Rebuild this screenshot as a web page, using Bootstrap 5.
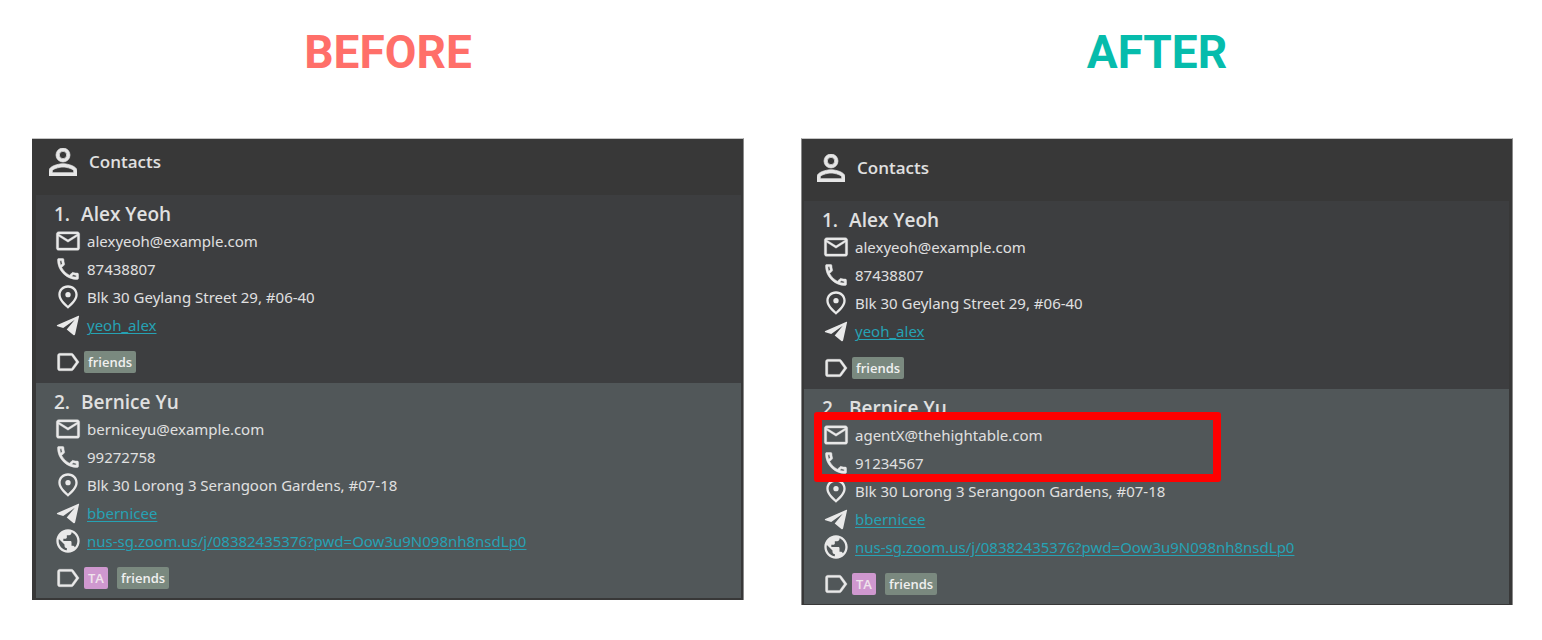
<!DOCTYPE html>
<html lang="en">
<head>
<meta charset="utf-8">
<meta name="viewport" content="width=device-width, initial-scale=1">
<title>Contacts: before and after</title>
<link href="https://cdn.jsdelivr.net/npm/bootstrap@5.3.0/dist/css/bootstrap.min.css" rel="stylesheet">
<style>
  body { font-family: "Noto Sans", "Open Sans", sans-serif; background: #fff; color: #e0e0e0; }
  .compare { display: grid; grid-template-columns: 1fr 1fr; column-gap: 57px; padding: 20px 29px 32px 32px; }
  .stage-title { font-family: Roboto, sans-serif; font-weight: 700; font-size: 46px; line-height: 64px; margin: 0 0 54px; text-align: center; }
  .title-before { color: #ff6f69; }
  .title-after { color: #06bcac; }
  .contacts-panel { background: #383838; border: 1px solid #8a8a8a; border-top-color: #c4c4c4; border-left-width: 0; border-bottom: 0; padding: 0 2px 2px 4px; }
  .panel-after { border-left-width: 1px; padding: 0 3px 1px 2px; }
  .panel-head { height: 56px; padding: 0 0 11px 13px; gap: 12px; }
  .panel-after .panel-head { height: 62px; padding-bottom: 4px; }
  .panel-head h2 { font-family: "Open Sans", sans-serif; font-size: 17px; line-height: 24px; font-weight: 600; margin: 0; }
  .person { background: #3d3e40; padding: 7px 18px 10px; }
  .person-alt { background: #515759; padding-bottom: 9px; }
  .person h3 { font-family: "Open Sans", sans-serif; font-size: 19px; line-height: 25px; font-weight: 600; margin: 0; display: flex; gap: 11px; }
  .detail { display: flex; align-items: center; gap: 5px; height: 28px; font-size: 15px; line-height: 20px; }
  .detail svg, .tags > svg { width: 28px; height: 28px; flex: none; fill: #e9e9e9; }
  .detail a { color: #26a2b4; text-decoration: underline; text-decoration-thickness: 1px; text-underline-offset: 2px; }
  .tags { display: flex; align-items: center; height: 22px; margin-top: 12px; }
  .chip { font-family: "Open Sans", sans-serif; font-size: 13px; line-height: 22px; font-weight: 600; padding: 0 4px; margin-left: 2px; border-radius: 2px; background: #7a897f; color: #f0f0f0; }
  .chip-ta { background: #cf98cf; color: #f0e4ec; margin-right: 7px; }
  .changed { position: relative; }
  .changed::after { content: ""; position: absolute; left: -8px; top: -9px; width: 407px; bottom: -5px; border: 8px solid #f00; border-radius: 3px; }
</style>
</head>
<body>
<svg class="d-none" aria-hidden="true">
  <symbol id="i-mail" viewBox="0 0 24 24"><path stroke="#e9e9e9" stroke-width=".3" d="M20 4H4c-1.100 0-2 .9-2 2v12c0 1.100.9 2 2 2h16c1.100 0 2-.9 2-2V6c0-1.100-.9-2-2-2zm0 14H4V8l8 5 8-5v10zm-8-7L4 6h16l-8 5z"/></symbol>
  <symbol id="i-phone" viewBox="0 0 24 24"><path stroke="#e9e9e9" stroke-width=".4" d="M6.540 5c.060.890.210 1.760.450 2.590l-1.200 1.200c-.410-1.200-.670-2.470-.760-3.790h1.510m9.860 12.020c.850.240 1.720.390 2.600.450v1.490c-1.320-.090-2.590-.350-3.800-.750l1.200-1.190M7.500 3H4c-.550 0-1 .450-1 1 0 9.390 7.610 17 17 17 .550 0 1-.450 1-1v-3.490c0-.550-.450-1-1-1-1.240 0-2.450-.200-3.570-.570a1.020 1.020 0 0 0-1.020.240l-2.200 2.200a15.050 15.050 0 0 1-6.590-6.590l2.200-2.200c.280-.280.360-.670.250-1.020A11.360 11.360 0 0 1 8.500 4c0-.550-.450-1-1-1z"/></symbol>
  <symbol id="i-pin" viewBox="0 0 24 24"><path fill-rule="evenodd" d="M12 2C7.300 2 3.700 5.500 3.700 10c0 5.200 5.700 9.500 8.300 12 2.600-2.500 8.300-6.800 8.300-12 0-4.500-3.600-8-8.300-8zm0 2c3.600 0 6.300 2.600 6.300 6 0 3.600-3.700 6.900-6.300 9.400C9.400 16.900 5.700 13.600 5.700 10c0-3.400 2.700-6 6.300-6z"/><circle cx="12" cy="10" r="2.300"/></symbol>
  <symbol id="i-plane" viewBox="0 0 24 24"><path d="M21 4 2.800 12c-.5.300-.5.800.1 1l5 1.500L17.800 7.600l-6.900 8.300 5.700 4.600c.7.500 1.300.2 1.500-.6L21.500 4.500c.1-.4-.1-.6-.5-.5z"/></symbol>
  <symbol id="i-globe" viewBox="0 0 24 24"><path d="M12 2C6.480 2 2 6.480 2 12s4.480 10 10 10 10-4.480 10-10S17.520 2 12 2zm-1 17.930c-3.950-.490-7-3.850-7-7.930 0-.620.080-1.210.210-1.790L9 15v1c0 1.100.900 2 2 2v1.930zm6.900-2.540c-.260-.810-1-1.390-1.900-1.390h-1v-3c0-.550-.450-1-1-1H8v-2h2c.550 0 1-.450 1-1V7h2c1.100 0 2-.900 2-2v-.410c2.930 1.190 5 4.060 5 7.410 0 2.080-.800 3.970-2.100 5.390z"/></symbol>
  <symbol id="i-tag" viewBox="0 0 24 24"><path stroke="#e9e9e9" stroke-width=".3" d="M16.630 5.340A2 2 0 0 0 15 4.500H5c-1.100 0-2 .9-2 2v11c0 1.100.9 2 2 2h10a2 2 0 0 0 1.630-.84L21.500 12l-4.870-6.660zM15 17.500H5V6.500H15L19 12 15 17.500z"/></symbol>
  <symbol id="i-person" viewBox="4 4 16 16"><path stroke="#e6e6e6" stroke-width=".4" d="M12 5.900a2.100 2.100 0 1 1 0 4.200 2.100 2.100 0 0 1 0-4.200m0 9c2.970 0 6.100 1.460 6.100 2.100v1.100H5.900V17c0-.640 3.130-2.100 6.100-2.100M12 4a4 4 0 1 0 0 8 4 4 0 0 0 0-8zm0 9c-2.670 0-8 1.340-8 4v3h16v-3c0-2.660-5.330-4-8-4z"/></symbol>
</svg>

<main class="compare">
  <section>
    <h1 class="stage-title title-before">BEFORE</h1>
    <div class="contacts-panel">
      <header class="panel-head d-flex align-items-center">
        <svg width="28" height="28" fill="#e6e6e6"><use href="#i-person"/></svg>
        <h2>Contacts</h2>
      </header>
      <article class="person">
        <h3><span>1.</span><span>Alex Yeoh</span></h3>
        <div class="detail"><svg><use href="#i-mail"/></svg><span>alexyeoh@example.com</span></div>
        <div class="detail"><svg><use href="#i-phone"/></svg><span>87438807</span></div>
        <div class="detail"><svg><use href="#i-pin"/></svg><span>Blk 30 Geylang Street 29, #06-40</span></div>
        <div class="detail"><svg><use href="#i-plane"/></svg><a href="#">yeoh_alex</a></div>
        <div class="tags"><svg><use href="#i-tag"/></svg><span class="chip">friends</span></div>
      </article>
      <article class="person person-alt">
        <h3><span>2.</span><span>Bernice Yu</span></h3>
        <div class="detail"><svg><use href="#i-mail"/></svg><span>berniceyu@example.com</span></div>
        <div class="detail"><svg><use href="#i-phone"/></svg><span>99272758</span></div>
        <div class="detail"><svg><use href="#i-pin"/></svg><span>Blk 30 Lorong 3 Serangoon Gardens, #07-18</span></div>
        <div class="detail"><svg><use href="#i-plane"/></svg><a href="#">bbernicee</a></div>
        <div class="detail"><svg><use href="#i-globe"/></svg><a href="#">nus-sg.zoom.us/j/08382435376?pwd=Oow3u9N098nh8nsdLp0</a></div>
        <div class="tags"><svg><use href="#i-tag"/></svg><span class="chip chip-ta">TA</span><span class="chip">friends</span></div>
      </article>
    </div>
  </section>

  <section>
    <h1 class="stage-title title-after">AFTER</h1>
    <div class="contacts-panel panel-after">
      <header class="panel-head d-flex align-items-center">
        <svg width="28" height="28" fill="#e6e6e6"><use href="#i-person"/></svg>
        <h2>Contacts</h2>
      </header>
      <article class="person">
        <h3><span>1.</span><span>Alex Yeoh</span></h3>
        <div class="detail"><svg><use href="#i-mail"/></svg><span>alexyeoh@example.com</span></div>
        <div class="detail"><svg><use href="#i-phone"/></svg><span>87438807</span></div>
        <div class="detail"><svg><use href="#i-pin"/></svg><span>Blk 30 Geylang Street 29, #06-40</span></div>
        <div class="detail"><svg><use href="#i-plane"/></svg><a href="#">yeoh_alex</a></div>
        <div class="tags"><svg><use href="#i-tag"/></svg><span class="chip">friends</span></div>
      </article>
      <article class="person person-alt">
        <h3><span>2.</span><span>Bernice Yu</span></h3>
        <div class="changed">
          <div class="detail"><svg><use href="#i-mail"/></svg><span>agentX@thehightable.com</span></div>
          <div class="detail"><svg><use href="#i-phone"/></svg><span>91234567</span></div>
        </div>
        <div class="detail"><svg><use href="#i-pin"/></svg><span>Blk 30 Lorong 3 Serangoon Gardens, #07-18</span></div>
        <div class="detail"><svg><use href="#i-plane"/></svg><a href="#">bbernicee</a></div>
        <div class="detail"><svg><use href="#i-globe"/></svg><a href="#">nus-sg.zoom.us/j/08382435376?pwd=Oow3u9N098nh8nsdLp0</a></div>
        <div class="tags"><svg><use href="#i-tag"/></svg><span class="chip chip-ta">TA</span><span class="chip">friends</span></div>
      </article>
    </div>
  </section>
</main>
<script src="https://cdn.jsdelivr.net/npm/bootstrap@5.3.0/dist/js/bootstrap.bundle.min.js"></script>
</body>
</html>
